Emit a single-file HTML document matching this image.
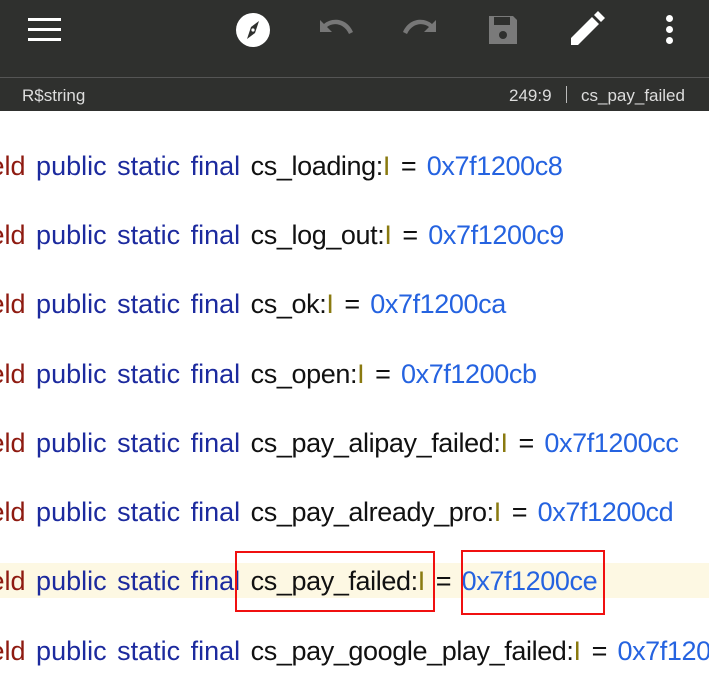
<!DOCTYPE html><html><head><style>
body{margin:0;width:709px;height:694px;overflow:hidden;background:#fff;font-family:"Liberation Sans",sans-serif;position:relative}
.wrap{position:absolute;left:0;top:0;width:709px;height:694px;overflow:hidden}
.top{position:absolute;left:0;top:0;width:709px;height:77px;background:#2f302e}
.sep{position:absolute;left:0;top:77px;width:709px;height:1px;background:#555}
.st{position:absolute;left:0;top:78px;width:709px;height:33px;background:#2f302e;color:#ddd;font-size:17px}
.ln{position:absolute;left:-24px;font-size:27px;white-space:pre;word-spacing:3px;line-height:30px}
.f{color:#8e1a10}.k{color:#1c2a9e}.n{color:#111;letter-spacing:-0.4px}.i{color:#8a7a10}.v{color:#2563e0;letter-spacing:-0.4px}
.hl{position:absolute;left:0;top:563px;width:709px;height:35px;background:#fdf8e3}
.box{position:absolute;border:2px solid #f01010}
</style></head><body><div class="wrap">
<div class="top">
<div style="position:absolute;left:28px;top:18px;width:33px;height:3px;background:#fff;box-shadow:0 10px 0 #fff,0 20px 0 #fff"></div>
<svg style="position:absolute;left:235px;top:12px" width="36" height="36" viewBox="0 0 36 36"><circle cx="18" cy="18" r="17" fill="#fff"/><path d="M24 9 L20 21 L12 27 L16 15Z" fill="#2f302e"/><circle cx="18" cy="18" r="1.6" fill="#fff"/></svg>
<svg style="position:absolute;left:316px;top:14px" width="40" height="30" viewBox="0 0 40 30"><path d="M4 6 V18 H16 L11 13 C17 8 28 9 33 20 L37 18 C31 4 16 3 8 10Z" fill="#777"/></svg>
<svg style="position:absolute;left:400px;top:14px" width="40" height="30" viewBox="0 0 40 30"><path d="M36 6 V18 H24 L29 13 C23 8 12 9 7 20 L3 18 C9 4 24 3 32 10Z" fill="#777"/></svg>
<svg style="position:absolute;left:486px;top:13px" width="34" height="34" viewBox="0 0 34 34"><path d="M3 3 H27 L31 7 V31 H3Z" fill="#7a7a7a"/><rect x="8" y="4" width="16" height="8" fill="#2f302e"/><circle cx="17" cy="22" r="4" fill="#2f302e"/></svg>
<svg style="position:absolute;left:568px;top:10px" width="40" height="38" viewBox="0 0 40 38"><path d="M3 35 V28 L24 7 L31 14 L10 35Z M26 5 L30 1 L37 8 L33 12Z" fill="#fff"/></svg>
<div style="position:absolute;left:666px;top:15px;width:7px;height:7px;border-radius:50%;background:#fff;box-shadow:0 11px 0 #fff,0 22px 0 #fff"></div>
</div>
<div class="sep"></div>
<div class="st"><span style="position:absolute;left:22px;top:8px">R$string</span><span style="position:absolute;left:509px;top:8px">249:9</span><span style="position:absolute;left:566px;top:8px;width:1px;height:17px;background:#bbb"></span><span style="position:absolute;left:581px;top:8px">cs_pay_failed</span></div>
<div class="hl"></div>
<div class="ln" style="top:151px"><span class="f">field</span> <span class="k">public static final</span> <span class="n">cs_loading:</span><span class="i">I</span> <span class="n">=</span> <span class="v">0x7f1200c8</span></div>
<div class="ln" style="top:220px"><span class="f">field</span> <span class="k">public static final</span> <span class="n">cs_log_out:</span><span class="i">I</span> <span class="n">=</span> <span class="v">0x7f1200c9</span></div>
<div class="ln" style="top:289px"><span class="f">field</span> <span class="k">public static final</span> <span class="n">cs_ok:</span><span class="i">I</span> <span class="n">=</span> <span class="v">0x7f1200ca</span></div>
<div class="ln" style="top:359px"><span class="f">field</span> <span class="k">public static final</span> <span class="n">cs_open:</span><span class="i">I</span> <span class="n">=</span> <span class="v">0x7f1200cb</span></div>
<div class="ln" style="top:428px"><span class="f">field</span> <span class="k">public static final</span> <span class="n">cs_pay_alipay_failed:</span><span class="i">I</span> <span class="n">=</span> <span class="v">0x7f1200cc</span></div>
<div class="ln" style="top:497px"><span class="f">field</span> <span class="k">public static final</span> <span class="n">cs_pay_already_pro:</span><span class="i">I</span> <span class="n">=</span> <span class="v">0x7f1200cd</span></div>
<div class="ln" style="top:566px"><span class="f">field</span> <span class="k">public static final</span> <span class="n">cs_pay_failed:</span><span class="i">I</span> <span class="n">=</span> <span class="v">0x7f1200ce</span></div>
<div class="ln" style="top:636px"><span class="f">field</span> <span class="k">public static final</span> <span class="n">cs_pay_google_play_failed:</span><span class="i">I</span> <span class="n">=</span> <span class="v">0x7f1200cf</span></div>
<div class="box" style="left:235px;top:551px;width:196px;height:57px"></div>
<div class="box" style="left:461px;top:550px;width:140px;height:61px"></div>
</div></body></html>
